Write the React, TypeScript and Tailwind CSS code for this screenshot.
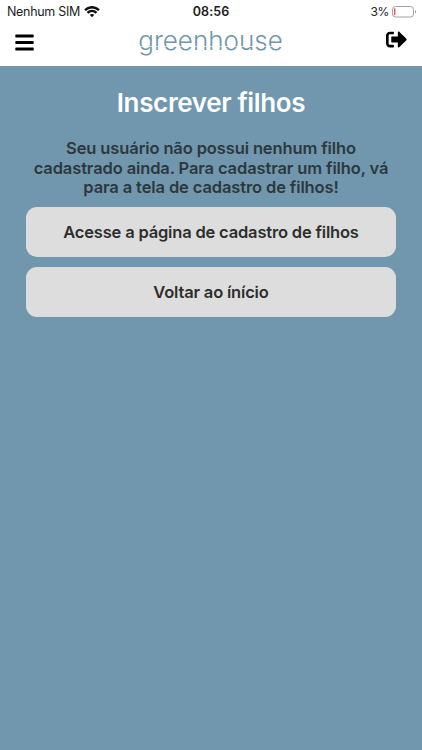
import { FaBars, FaSignOutAlt } from "react-icons/fa";

type ActionButtonProps = { label: string };

function WifiIcon() {
  return (
    <svg width="16" height="12" viewBox="0 0 16 12" fill="none" stroke="#111" strokeWidth="2.4">
      <path d="M1 4.1C5 0.2 11 0.2 15 4.1" />
      <path d="M3.5 6.9C6.2 4.4 9.8 4.4 12.5 6.9" />
      <path d="M8 11.2L5.7 8.8C7 7.6 9 7.6 10.3 8.8Z" fill="#111" stroke="none" />
    </svg>
  );
}

function BatteryIcon() {
  return (
    <svg width="25" height="12" viewBox="0 0 25 12" fill="none">
      <rect x="0.5" y="0.5" width="21" height="10.5" rx="3" stroke="#a3a3a3" />
      <rect x="2" y="2.2" width="1.4" height="7" rx="0.6" fill="#f0524f" />
      <path d="M23 4C24.4 4.5 24.4 7 23 7.5Z" fill="#999" />
    </svg>
  );
}

function StatusBar() {
  return (
    <div className="grid h-5 grid-cols-3 items-center pt-0.5 text-[12.5px] leading-[18px] text-[#1c1c1c]">
      <div className="flex items-center gap-1 pl-[7px]">
        <span className="pt-px whitespace-nowrap tracking-[-0.3px]">Nenhum SIM</span>
        <WifiIcon />
      </div>
      <span className="pt-px text-center font-semibold tracking-[0.1px]">08:56</span>
      <div className="flex items-center justify-end gap-[3px] pr-[5px]">
        <span className="pt-px text-[12px] tracking-[-0.3px]">3%</span>
        <BatteryIcon />
      </div>
    </div>
  );
}

function Logo() {
  return (
    <div className="relative text-[26px] leading-[34px] font-light text-[#7097a8]">
      greenhouse
      {/* stencil cut through the base of the letters */}
      <span className="absolute inset-x-0 top-[22px] h-px bg-white/70" />
    </div>
  );
}

function Header() {
  return (
    <header className="flex h-[46px] items-start justify-between pr-[15px] pl-[14px]">
      <FaBars className="mt-3 size-[21px] text-black" />
      <div className="pt-1">
        <Logo />
      </div>
      <FaSignOutAlt className="mt-[9px] size-[21px] text-black" />
    </header>
  );
}

function ActionButton({ label }: ActionButtonProps) {
  return (
    <button className="h-[50px] w-full rounded-[11px] bg-[#dddddd] pt-px text-[16.5px] font-semibold tracking-[-0.18px] text-[#2e2e2e]">
      {label}
    </button>
  );
}

export default function App() {
  return (
    <div className="flex h-[750px] w-[422px] flex-col bg-white font-['Inter',sans-serif]">
      <StatusBar />
      <Header />
      <main className="flex-1 bg-[#7097ad] px-[26px] pt-5">
        <h1 className="text-center text-[26px] leading-[33px] font-semibold tracking-[-0.35px] text-white">
          Inscrever filhos
        </h1>
        <p className="mt-5 text-center text-[16.5px] leading-[19.5px] font-semibold tracking-[-0.12px] whitespace-nowrap text-[#2d383e]">
          Seu usuário não possui nenhum filho
          <br />
          cadastrado ainda. Para cadastrar um filho, vá
          <br />
          para a tela de cadastro de filhos!
        </p>
        <div className="mt-[9px] flex flex-col gap-2.5">
          <ActionButton label="Acesse a página de cadastro de filhos" />
          <ActionButton label="Voltar ao ínício" />
        </div>
      </main>
    </div>
  );
}
